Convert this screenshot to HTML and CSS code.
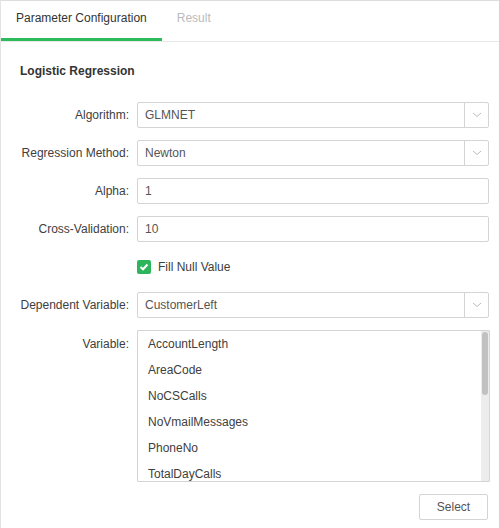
FILE: index.html
```html
<!DOCTYPE html>
<html>
<head>
<meta charset="utf-8">
<link rel="stylesheet" href="styles.css">
</head>
<body>
<div class="panel">
  <div class="tabs">
    <div class="tab active">Parameter Configuration</div>
    <div class="tab">Result</div>
  </div>
  <div class="content">
    <div class="title">Logistic Regression</div>
    <div class="row">
      <div class="label">Algorithm:</div>
      <div class="field select"><span class="value">GLMNET</span><span class="arrow"><svg width="10" height="6" viewBox="0 0 10 6"><path d="M1 1 L5 4.5 L9 1" fill="none" stroke="#bbb" stroke-width="1"/></svg></span></div>
    </div>
    <div class="row">
      <div class="label">Regression Method:</div>
      <div class="field select"><span class="value">Newton</span><span class="arrow"><svg width="10" height="6" viewBox="0 0 10 6"><path d="M1 1 L5 4.5 L9 1" fill="none" stroke="#bbb" stroke-width="1"/></svg></span></div>
    </div>
    <div class="row">
      <div class="label">Alpha:</div>
      <div class="field"><span class="value">1</span></div>
    </div>
    <div class="row">
      <div class="label">Cross-Validation:</div>
      <div class="field"><span class="value">10</span></div>
    </div>
    <div class="row">
      <div class="label"></div>
      <div class="check"><span class="box"><svg width="10" height="8" viewBox="0 0 10 8"><path d="M1.5 4 L4 6.3 L8.5 1.5" fill="none" stroke="#fff" stroke-width="2"/></svg></span><span class="check-text">Fill Null Value</span></div>
    </div>
    <div class="row">
      <div class="label">Dependent Variable:</div>
      <div class="field select"><span class="value">CustomerLeft</span><span class="arrow"><svg width="10" height="6" viewBox="0 0 10 6"><path d="M1 1 L5 4.5 L9 1" fill="none" stroke="#bbb" stroke-width="1"/></svg></span></div>
    </div>
    <div class="row list-row">
      <div class="label">Variable:</div>
      <div class="list">
        <div class="items">
          <div class="item">AccountLength</div>
          <div class="item">AreaCode</div>
          <div class="item">NoCSCalls</div>
          <div class="item">NoVmailMessages</div>
          <div class="item">PhoneNo</div>
          <div class="item">TotalDayCalls</div>
        </div>
        <div class="scrollbar"><div class="thumb"></div></div>
      </div>
    </div>
    <div class="actions">
      <button class="btn">Select</button>
    </div>
  </div>
</div>
</body>
</html>
```
FILE: styles.css
```css
html, body {
  margin: 0;
  padding: 0;
  background: #fff;
}
body {
  font-family: "Liberation Sans", Arial, sans-serif;
  font-size: 12px;
  color: #333;
  width: 499px;
  height: 528px;
  overflow: hidden;
}
.panel {
  border-top: 1px solid #ddd;
  border-left: 1px solid #e3e3e3;
  height: 527px;
}
.tabs {
  display: flex;
  height: 40px;
  border-bottom: 1px solid #e8e8e8;
}
.tab {
  padding: 0 15px;
  height: 37px;
  line-height: 35px;
  color: #bbb;
  border-bottom: 3px solid transparent;
}
.tab.active {
  color: #333;
  border-bottom-color: #2dbb5c;
}
.content {
  padding: 22px 10px 0 19px;
}
.title {
  font-weight: bold;
  font-size: 12px;
  color: #333;
  line-height: 14px;
  margin-bottom: 24px;
}
.row {
  display: flex;
  align-items: center;
  height: 26px;
  margin-bottom: 12px;
}
.label {
  width: 109px;
  flex: none;
  text-align: right;
  padding-right: 8px;
  color: #404040;
}
.field {
  flex: 1;
  height: 24px;
  border: 1px solid #d4d4d4;
  border-radius: 2px;
  display: flex;
  align-items: center;
}
.value {
  flex: 1;
  padding-left: 7px;
  color: #555;
}
.arrow {
  width: 23px;
  height: 24px;
  border-left: 1px solid #d4d4d4;
  display: flex;
  align-items: center;
  justify-content: center;
}
.check {
  display: flex;
  align-items: center;
}
.box {
  width: 14px;
  height: 14px;
  border-radius: 2px;
  background: #2db55d;
  display: flex;
  align-items: center;
  justify-content: center;
}
.check-text {
  margin-left: 7px;
  color: #404040;
}
.list-row {
  height: auto;
  align-items: flex-start;
  margin-bottom: 12px;
}
.list-row .label {
  padding-top: 7px;
}
.list {
  flex: 1;
  height: 150px;
  border: 1px solid #d4d4d4;
  border-radius: 1px;
  display: flex;
  margin-right: -1px;
}
.items {
  flex: 1;
  overflow: hidden;
}
.scrollbar {
  width: 8px;
  background: #ececec;
  padding: 1px 1px 0 1px;
  box-sizing: border-box;
}
.thumb {
  height: 63px;
  background: #c1c1c1;
  border-radius: 3px;
}
.item {
  height: 26px;
  line-height: 26px;
  padding-left: 10px;
  color: #404040;
}
.actions {
  display: flex;
  justify-content: flex-end;
}
.btn {
  width: 69px;
  height: 26px;
  border: 1px solid #d4d4d4;
  border-radius: 2px;
  background: #fff;
  font-family: "Liberation Sans", Arial, sans-serif;
  font-size: 12px;
  color: #555;
  margin-right: 1px;
  padding: 0;
}
```
